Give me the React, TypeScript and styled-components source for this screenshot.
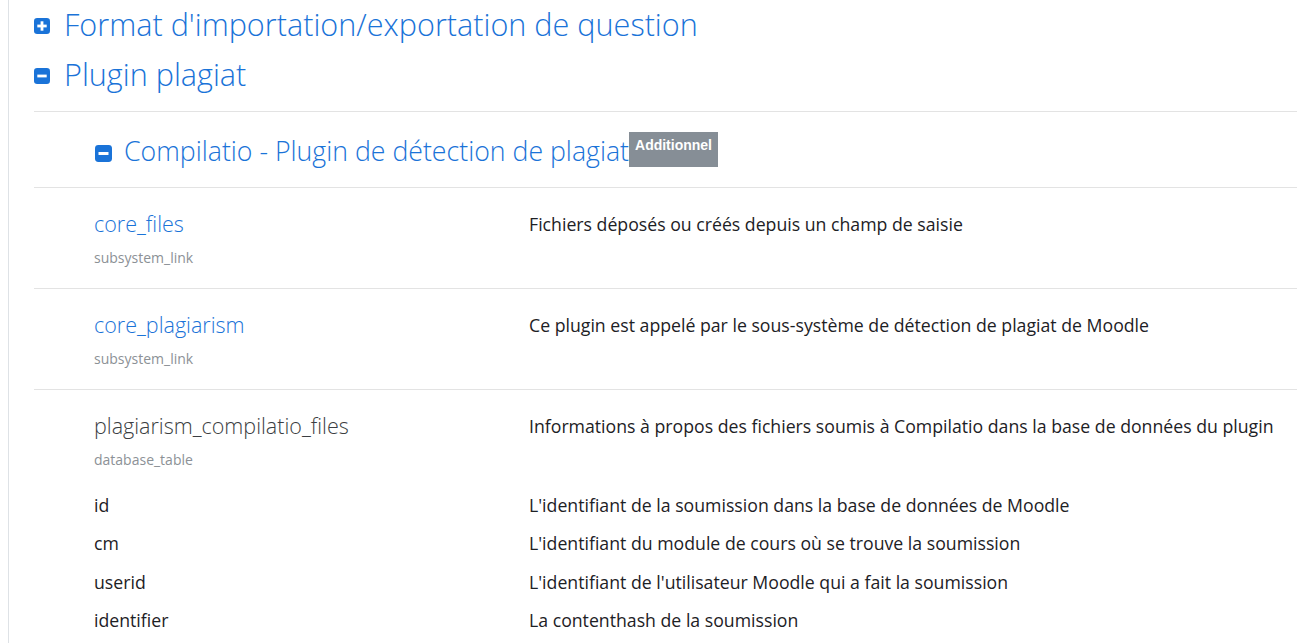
import React from 'react'
import styled, { createGlobalStyle } from 'styled-components'

const GlobalStyle = createGlobalStyle`
    html, body {
        margin: 0;
        padding: 0;
        background: #fff;
        overflow: hidden;
    }
    body {
        font-family: "Open Sans", "Liberation Sans", sans-serif;
        color: #1d2125;
    }
`

const Page = styled.div`
    padding-left: 8px;
    width: 1297px;
    height: 643px;
    box-sizing: border-box;
`

const Container = styled.div`
    border-left: 1px solid #dee2e6;
    padding-left: 25px;
    min-height: 643px;
`

const Heading = styled.h2`
    display: flex;
    align-items: center;
    margin: 0;
    height: 47px;
    padding-bottom: 3px;
    font-weight: 300;
    font-size: 30.6px;
    color: #1a73d8;
    white-space: nowrap;
`

const SubSection = styled.div`
    border-top: 1px solid #e3e3e3;
    margin-top: 11px;
`

const SubHeading = styled.h3`
    display: flex;
    align-items: flex-start;
    margin: 0;
    padding: 22px 0 19px 61px;
    font-weight: 300;
    font-size: 26.7px;
    line-height: 34px;
    color: #1a73d8;
    white-space: nowrap;
`

const IconBox = styled.span<{ gap: number; size: number }>`
    display: inline-flex;
    width: ${p => p.size}px;
    height: ${p => p.size}px;
    margin-right: ${p => p.gap}px;
    align-self: center;
    margin-top: 4px;
`

const Badge = styled.span`
    display: inline-block;
    background: #868e96;
    color: #fff;
    font-family: "Liberation Sans", Arial, sans-serif;
    font-weight: 700;
    font-size: 14px;
    line-height: 15px;
    padding: 6px 6px 14px 6px;
    margin-top: -2px;
`

const Row = styled.div`
    display: grid;
    grid-template-columns: 435px 1fr;
    padding: 21px 0 20px 60px;
    border-top: 1px solid #e3e3e3;
`

const Name = styled.div<{ link?: boolean }>`
    font-weight: 300;
    font-size: 21.5px;
    line-height: 30px;
    color: ${p => (p.link ? '#1a73d8' : '#3b3e42')};
`

const Kind = styled.div`
    margin-top: 9px;
    font-size: 14px;
    line-height: 20px;
    color: #8c9196;
`

const Desc = styled.div`
    font-size: 17.7px;
    line-height: 30px;
    color: #1d2125;
    white-space: nowrap;
`

const Fields = styled.div`
    display: grid;
    grid-template-columns: 435px 1fr;
    margin-top: 16px;
    font-size: 17.7px;
    line-height: 38.3px;
    grid-column: 1 / span 2;
    white-space: nowrap;
`

const ToggleIcon = ({ open, size }: { open: boolean; size: number }) => (
    <svg width={size} height={size} viewBox="0 0 16 16">
        <rect x="0" y="0" width="16" height="16" rx="3.2" fill="#1a73d8" />
        <rect x="3.3" y="6.6" width="9.4" height="2.8" fill="#fff" />
        {!open && <rect x="6.6" y="3.3" width="2.8" height="9.4" fill="#fff" />}
    </svg>
)

const items = [
    { name: 'core_files', kind: 'subsystem_link', desc: 'Fichiers déposés ou créés depuis un champ de saisie', link: true },
    { name: 'core_plagiarism', kind: 'subsystem_link', desc: 'Ce plugin est appelé par le sous-système de détection de plagiat de Moodle', link: true },
]

const fields = [
    ['id', "L'identifiant de la soumission dans la base de données de Moodle"],
    ['cm', "L'identifiant du module de cours où se trouve la soumission"],
    ['userid', "L'identifiant de l'utilisateur Moodle qui a fait la soumission"],
    ['identifier', 'La contenthash de la soumission'],
]

const App = () => (
    <Page>
        <GlobalStyle />
        <Container>
            <Heading>
                <IconBox gap={14} size={16}><ToggleIcon open={false} size={16} /></IconBox>
                Format d'importation/exportation de question
            </Heading>
            <Heading>
                <IconBox gap={14} size={16}><ToggleIcon open size={16} /></IconBox>
                Plugin plagiat
            </Heading>
            <SubSection>
                <SubHeading>
                    <IconBox gap={12} size={17}><ToggleIcon open size={17} /></IconBox>
                    Compilatio - Plugin de détection de plagiat
                    <Badge>Additionnel</Badge>
                </SubHeading>
                {items.map(it => (
                    <Row key={it.name}>
                        <div>
                            <Name link={it.link}>{it.name}</Name>
                            <Kind>{it.kind}</Kind>
                        </div>
                        <Desc>{it.desc}</Desc>
                    </Row>
                ))}
                <Row>
                    <div>
                        <Name>plagiarism_compilatio_files</Name>
                        <Kind>database_table</Kind>
                    </div>
                    <Desc>Informations à propos des fichiers soumis à Compilatio dans la base de données du plugin</Desc>
                    <Fields>
                        {fields.map(([f, d]) => (
                            <React.Fragment key={f}>
                                <div>{f}</div>
                                <div>{d}</div>
                            </React.Fragment>
                        ))}
                    </Fields>
                </Row>
            </SubSection>
        </Container>
    </Page>
)

export default App
